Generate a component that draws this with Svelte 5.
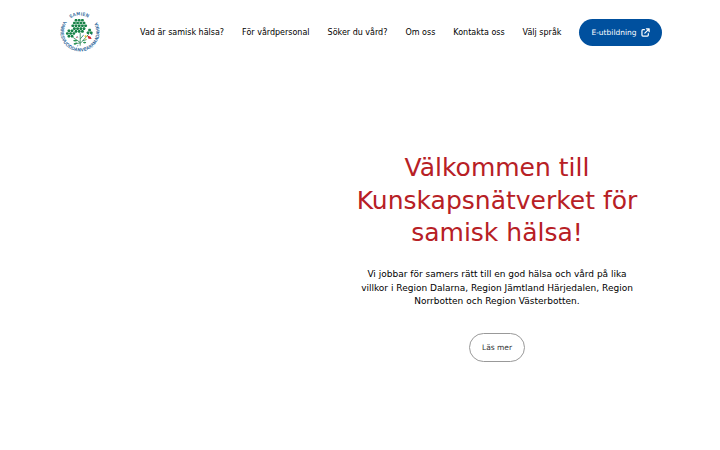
<script>
  const links = [
    'Vad är samisk hälsa?',
    'För vårdpersonal',
    'Söker du vård?',
    'Om oss',
    'Kontakta oss',
    'Välj språk'
  ];

  // rows of green hexagons: y, first x, how many
  const rows = [
    [8.2, 16, 3],
    [11, 14.4, 4],
    [13.8, 12.8, 5],
    [16.6, 14.4, 4],
    [19.4, 16, 3],
    [18.8, 8.9, 2],
    [21.5, 7.4, 3],
    [24.2, 8.9, 2],
    [18.1, 29.6, 1],
    [20.7, 28, 2]
  ];

  let leaves = [];
  rows.forEach(([y, x, count]) => {
    for (let i = 0; i < count; i++) {
      leaves.push([x + i * 3.2, y]);
    }
  });

  function hexagon([x, y]) {
    return `M${x - 1.6} ${y}l.7-1.3h1.8l.7 1.3-.7 1.3h-1.8z`;
  }
</script>

<header>
  <a class="logo" href="#start" aria-label="Start">
    <svg viewBox="0 0 40 40" width="40" height="40">
      <defs>
        <path id="ring-top" d="M10.6 6.2A16.4 16.4 0 0 1 29 6.2" />
        <path id="ring-bottom" d="M3.9 9.15A19.4 19.4 0 1 0 36.1 9.15" />
      </defs>
      <g class="ring">
        <text><textPath href="#ring-top" textLength="18.5">SAMIEN</textPath></text>
        <text><textPath href="#ring-bottom" textLength="82">VARRESVUODDANVEARRMADAHKA</textPath></text>
      </g>
      <g class="crown">
        {#each leaves as leaf}
          <path d={hexagon(leaf)} />
        {/each}
      </g>
      <path class="stem" d="M20.2 21v12.7M20.2 30.5l-7-5M20.2 31.5l8.5-9.3M22.6 28.8l4-1.2M15.6 31.6l4.6-.7M20.2 27l3-3.5" />
      <g class="leaf">
        <ellipse cx="15.2" cy="28.6" rx="2" ry=".9" />
        <ellipse cx="15.5" cy="31.6" rx="1.9" ry=".9" transform="rotate(-15 15.5 31.6)" />
        <ellipse cx="24.6" cy="30.6" rx="1.6" ry=".8" />
      </g>
      <path class="blue" d="M17 24.5l1.2 1M22.4 24.2l1.2-1M18.2 33.4l-1 .6M31 22.8l1.5-.8" />
      <path class="yellow" d="M25.2 23l1.8 1-1.1 1.4-1.6-.8zM25 26.6l1.8.3-1 1.2z" />
      <path class="red" d="M27.2 23.5l3.4 1.2 1 2.2-3.1-.2zM16.2 24.8h1.1v1h-1.1z" />
    </svg>
  </a>
  <nav>
    {#each links as link}
      <a href="#{link}">{link}</a>
    {/each}
    <a class="education" href="#utbildning">
      E-utbildning
      <svg viewBox="0 0 16 16" width="9" height="9">
        <path d="M6 3H3.4Q1.7 3 1.7 4.7v7.9q0 1.7 1.7 1.7h7.9q1.7 0 1.7-1.7V10M9.5 1.5h5V6.5M14 2L6.8 9.2" />
      </svg>
    </a>
  </nav>
</header>

<main>
  <section>
    <h1>Välkommen till Kunskapsnätverket för samisk hälsa!</h1>
    <p>Vi jobbar för samers rätt till en god hälsa och vård på lika villkor i Region Dalarna, Region Jämtland Härjedalen, Region Norrbotten och Region Västerbotten.</p>
    <a class="more" href="#mer">Läs mer</a>
  </section>
</main>

<style>
  :global(body) {
    margin: 0;
    background: #fff;
    font-family: "DejaVu Sans", sans-serif;
    overflow: hidden;
  }
  a {
    color: inherit;
    text-decoration: none;
  }
  header {
    display: flex;
    align-items: center;
    justify-content: space-between;
    height: 64px;
    padding: 0 57.9px 0 60px;
    box-sizing: border-box;
  }
  .logo,
  .logo svg {
    display: block;
  }
  .logo svg {
    overflow: visible;
  }
  .ring {
    fill: #1f6298;
    stroke: #1f6298;
    stroke-width: 0.15;
    font-size: 4.3px;
  }
  .crown {
    fill: #178247;
  }
  .stem {
    fill: none;
    stroke: #268653;
    stroke-width: 0.8;
  }
  .leaf {
    fill: #2b9355;
  }
  .blue {
    fill: none;
    stroke: #3979a8;
    stroke-width: 0.8;
  }
  .yellow {
    fill: #e7cf3e;
  }
  .red {
    fill: #d32632;
  }
  nav {
    display: flex;
    align-items: center;
    gap: 18px;
    font-size: 8px;
    color: #000;
    white-space: nowrap;
  }
  .education {
    display: flex;
    align-items: center;
    gap: 4.5px;
    height: 27px;
    padding: 0 12px;
    box-sizing: border-box;
    border-radius: 14px;
    background: #00509e;
    color: #fff;
    font-size: 7.5px;
  }
  .education svg {
    fill: none;
    stroke: #fff;
    stroke-width: 2.2;
    stroke-linecap: round;
    stroke-linejoin: round;
  }
  main {
    display: flex;
    justify-content: flex-end;
    padding: 88px 77px 0 0;
  }
  section {
    display: flex;
    flex-direction: column;
    align-items: center;
    width: 292px;
    text-align: center;
  }
  h1 {
    margin: 0;
    color: #b72025;
    font-size: 25px;
    font-weight: 400;
    line-height: 32.5px;
  }
  p {
    width: 280px;
    margin: 18.6px 0 24.4px;
    color: #000;
    font-size: 9px;
    line-height: 13.5px;
  }
  .more {
    padding: 0 12px;
    border: 1px solid #999;
    border-radius: 15px;
    color: #333;
    font-size: 7.5px;
    line-height: 27px;
  }
</style>
